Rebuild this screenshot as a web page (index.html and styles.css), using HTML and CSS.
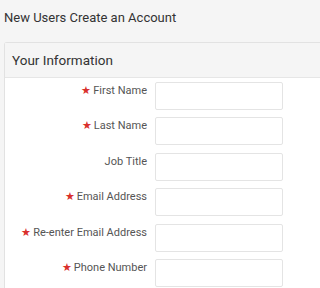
FILE: index.html
```html
<!DOCTYPE html>
<html>
<head>
<meta charset="utf-8">
<link rel="stylesheet" href="styles.css">
</head>
<body>
<div class="page">
  <h1 class="title">New Users Create an Account</h1>
  <div class="panel">
    <div class="panel-heading">Your Information</div>
    <div class="panel-body">
      <div class="row"><label class="label"><span class="req">★</span>First Name</label><input class="field" type="text"></div>
      <div class="row"><label class="label"><span class="req">★</span>Last Name</label><input class="field" type="text"></div>
      <div class="row"><label class="label">Job Title</label><input class="field" type="text"></div>
      <div class="row"><label class="label"><span class="req">★</span>Email Address</label><input class="field" type="text"></div>
      <div class="row"><label class="label"><span class="req">★</span>Re-enter Email Address</label><input class="field" type="text"></div>
      <div class="row"><label class="label"><span class="req">★</span>Phone Number</label><input class="field" type="text"></div>
    </div>
  </div>
</div>
</body>
</html>
```
FILE: styles.css
```css
html, body {
  margin: 0;
  padding: 0;
  background: #f5f5f5;
  overflow: hidden;
}
.page {
  font-family: Roboto, "Liberation Sans", sans-serif;
  color: #333;
  width: 330px;
}
.title {
  margin: 0;
  height: 42px;
  padding: 8px 0 0 4px;
  box-sizing: border-box;
  font-size: 13px;
  font-weight: 400;
  line-height: 20px;
  color: #333;
}
.panel {
  margin-left: 4px;
  border: 1px solid #e2e2e2;
  border-right: none;
  border-radius: 3px 0 0 3px;
  background: #fff;
}
.panel-heading {
  height: 34px;
  padding: 0 7px;
  display: flex;
  align-items: center;
  background: #f5f5f5;
  border-bottom: 1px solid #e6e6e6;
  font-size: 13.5px;
  color: #333;
}
.panel-body {
  display: flex;
  flex-direction: column;
  gap: 7.4px;
  padding-top: 4px;
  padding-bottom: 10px;
}
.row {
  display: flex;
  align-items: flex-start;
}
.label {
  width: 142px;
  text-align: right;
  font-size: 11px;
  line-height: 16px;
  padding-top: 1px;
  color: #555;
}
.req {
  color: #d9302c;
  font-size: 11px;
  margin-right: 2px;
}
.field {
  margin: 0 0 0 8px;
  width: 128px;
  height: 28px;
  box-sizing: border-box;
  border: 1px solid #e4e4e4;
  border-radius: 2px;
  background: #fff;
  padding: 0 6px;
}
```
